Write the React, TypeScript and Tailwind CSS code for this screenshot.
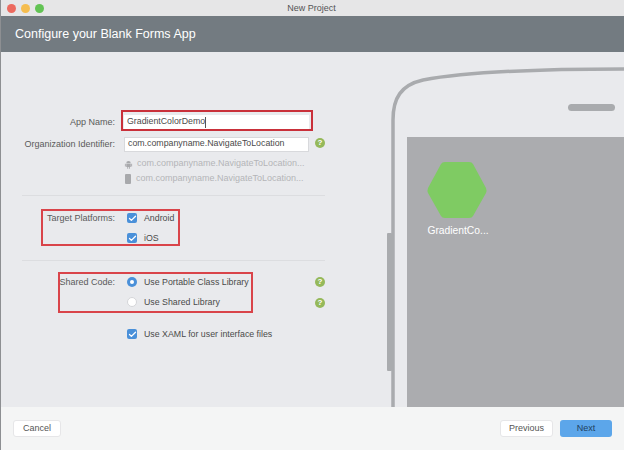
import { Check } from 'lucide-react';

function HelpDot({ className }: { className: string }) {
  return (
    <span
      className={`absolute flex h-[10px] w-[10px] items-center justify-center rounded-full bg-[#95b95a] text-[8px] font-bold leading-none text-white ${className}`}
    >
      ?
    </span>
  );
}

function CheckBox({ label }: { label: string }) {
  return (
    <div className="flex h-[14px] items-center">
      <span className="flex h-[10px] w-[10px] items-center justify-center rounded-[2px] bg-[#4a90d9]">
        <Check className="h-[9px] w-[9px] text-white" strokeWidth={3.5} />
      </span>
      <span className="ml-[7px] text-[8.800px] leading-none text-[#4a4a4a]">{label}</span>
    </div>
  );
}

function Radio({ label, selected }: { label: string; selected?: boolean }) {
  return (
    <div className="flex h-[14px] items-center">
      {selected ? (
        <span className="flex h-[10px] w-[10px] items-center justify-center rounded-full bg-[#4a90d9]">
          <span className="h-[4px] w-[4px] rounded-full bg-white" />
        </span>
      ) : (
        <span className="h-[10px] w-[10px] rounded-full border border-[#d5d6d9] bg-white" />
      )}
      <span className="ml-[7px] text-[8.800px] leading-none text-[#4a4a4a]">{label}</span>
    </div>
  );
}

function Label({ text }: { text: string }) {
  return <div className="w-[115px] shrink-0 pr-[1px] text-right text-[9px] leading-none text-[#5a5a5a]">{text}</div>;
}

export default function App() {
  return (
    <div className="flex h-[450px] w-[624px] flex-col overflow-hidden border-l border-[#8d8f92] bg-[#e9eaed] font-['Liberation_Sans',sans-serif]">
      {/* Title bar */}
      <div className="relative flex h-[16px] shrink-0 items-center justify-center bg-[#e6e6e7]">
        <div className="absolute left-[6px] flex gap-[5px]">
          <span className="h-[9px] w-[9px] rounded-full bg-[#ec6a5f]" />
          <span className="h-[9px] w-[9px] rounded-full bg-[#f5bd4f]" />
          <span className="h-[9px] w-[9px] rounded-full bg-[#62c354]" />
        </div>
        <span className="relative top-[1px] -left-[1px] text-[9px] text-[#555]">New Project</span>
      </div>

      {/* Header */}
      <div className="flex h-[36px] shrink-0 items-center bg-[#737b81] pl-[14px] text-[12.5px] text-white">
        Configure your Blank Forms App
      </div>

      {/* Body */}
      <div className="relative flex min-h-0 flex-1">
        <div className="w-[330px] shrink-0 pt-[63px]">
          <div className="flex h-[14px] items-center">
            <Label text="App Name:" />
            <div className="ml-[8px] flex h-[15px] w-[185px] items-center bg-white pl-[3px] text-[8.800px] text-[#4a4a4a]">
              GradientColorDemo
              <span className="h-[11px] w-px bg-[#555]" />
            </div>
          </div>
          <div className="mt-[8px] flex h-[14px] items-center">
            <Label text="Organization Identifier:" />
            <div className="ml-[8px] flex h-[15px] w-[185px] items-center border border-[#d8d9dc] bg-white pl-[3px] text-[8.800px] text-[#4a4a4a]">
              com.companyname.NavigateToLocation
            </div>
          </div>
          <div className="ml-[123px] mt-[6px] flex h-[14px] items-center text-[9px] text-[#b4b5b8]">
            <svg className="h-[9px] w-[9px]" viewBox="0 0 10 10" fill="#a8a9ac">
              <path d="M2.5 3.6a2.500 2.500 0 0 1 5 0zM2.500 4.200h5v3.600h-1v2h-1v-2h-.9v2h-1v-2h-1.100zM1 4.200h1v3H1zM8 4.200h1v3H8z" />
            </svg>
            <span className="ml-[4px]">com.companyname.NavigateToLocation...</span>
          </div>
          <div className="ml-[123px] mt-[1px] flex h-[14px] items-center text-[9px] text-[#b4b5b8]">
            <span className="ml-[1px] h-[10px] w-[6px] rounded-[1px] bg-[#a8a9ac]" />
            <span className="ml-[5px]">com.companyname.NavigateToLocation...</span>
          </div>
          <div className="ml-[21px] mt-[9px] h-px w-[303px] bg-[#dcdde0]" />

          <div className="mt-[15px] flex h-[14px] items-center">
            <Label text="Target Platforms:" />
            <div className="ml-[11px]">
              <CheckBox label="Android" />
            </div>
          </div>
          <div className="ml-[126px] mt-[6px]">
            <CheckBox label="iOS" />
          </div>
          <div className="ml-[21px] mt-[15px] h-px w-[303px] bg-[#dcdde0]" />

          <div className="mt-[14px] flex h-[14px] items-center">
            <Label text="Shared Code:" />
            <div className="ml-[11px]">
              <Radio label="Use Portable Class Library" selected />
            </div>
          </div>
          <div className="ml-[126px] mt-[6px]">
            <Radio label="Use Shared Library" />
          </div>
          <div className="ml-[126px] mt-[18px]">
            <CheckBox label="Use XAML for user interface files" />
          </div>
        </div>

        {/* Phone preview */}
        <div className="relative min-w-0 flex-1">
          <svg className="absolute inset-0 h-full w-full" viewBox="0 0 293 355" fill="none">
            <path d="M62 355V68C62 46 70 33 92 28C140 19 210 17 293 17" stroke="#a9abae" strokeWidth="3.500" />
            <rect x="56" y="181" width="5" height="138" rx="1" fill="#a9abae" />
            <rect x="237" y="52" width="47" height="7" rx="3.500" fill="#a9abae" />
          </svg>
          <div className="absolute bottom-0 left-[76px] right-0 top-[85px] bg-[#abacaf]">
            <svg className="ml-[20px] mt-[25px] h-[57px] w-[60px]" viewBox="0 0 60 57">
              <path d="M14 2Q15 0 18 0H42Q45 0 46 2L59 26Q60 28.500 59 31L46 54Q45 56 42 56H18Q15 56 14 54L1 31Q0 28.500 1 26Z" fill="#7fcb63" />
            </svg>
            <div className="ml-[20px] mt-[5px] w-[62px] text-center text-[10.300px] leading-[14px] whitespace-nowrap text-white">GradientCo...</div>
          </div>
        </div>

        {/* Red annotation boxes */}
        <div className="absolute left-[120px] top-[58px] h-[21px] w-[192px] border-2 border-[#c9303a]" />
        <div className="absolute left-[40px] top-[157px] h-[37px] w-[139px] border-2 border-[#d9444a]" />
        <div className="absolute left-[57px] top-[220px] h-[41px] w-[195px] border-2 border-[#d9444a]" />
        <HelpDot className="left-[314px] top-[86px]" />
        <HelpDot className="left-[314px] top-[225px]" />
        <HelpDot className="left-[314px] top-[246px]" />
      </div>

      {/* Footer */}
      <div className="flex h-[43px] shrink-0 items-center justify-between bg-[#f4f5f5] pl-[12px] pr-[12px]">
        <button className="h-[17px] w-[48px] rounded-[3px] border border-[#e6e6e8] bg-white text-[9px] text-[#555]">Cancel</button>
        <div className="flex gap-[7px]">
          <button className="h-[17px] w-[53px] rounded-[3px] border border-[#e6e6e8] bg-white text-[9px] text-[#555]">Previous</button>
          <button className="h-[17px] w-[52px] rounded-[3px] bg-[#5ca6ea] text-[9px] text-[#21415f]">Next</button>
        </div>
      </div>
    </div>
  );
}
